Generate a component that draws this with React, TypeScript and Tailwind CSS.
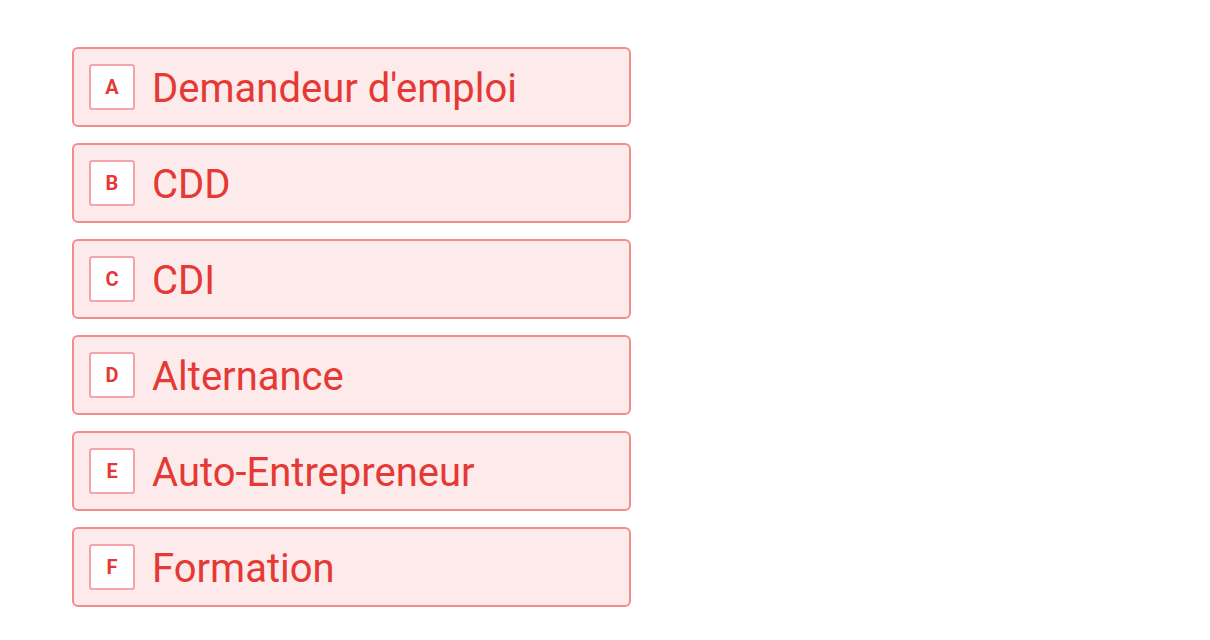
import React from "react";

const options = [
  { key: "A", label: "Demandeur d'emploi" },
  { key: "B", label: "CDD" },
  { key: "C", label: "CDI" },
  { key: "D", label: "Alternance" },
  { key: "E", label: "Auto-Entrepreneur" },
  { key: "F", label: "Formation" },
];

export default function App() {
  return (
    <div className="w-[1210px] h-[640px] bg-white pt-[47px] pl-[72px] font-['Roboto',sans-serif]">
      <div className="flex flex-col gap-[16px] w-[559px]">
        {options.map((o) => (
          <div
            key={o.key}
            className="h-[80px] flex items-center gap-[17px] px-[15px] rounded-[6px] border-2 border-[#f48c8c] bg-[#fdeaea]"
          >
            <div className="w-[46px] h-[46px] shrink-0 flex items-center justify-center bg-white border-2 border-[#f5a5a5] rounded-[3px] text-[#e53935] font-bold text-[20px]">
              {o.key}
            </div>
            <span className="text-[#e53935] text-[40px] leading-none pt-[3px]">{o.label}</span>
          </div>
        ))}
      </div>
    </div>
  );
}
